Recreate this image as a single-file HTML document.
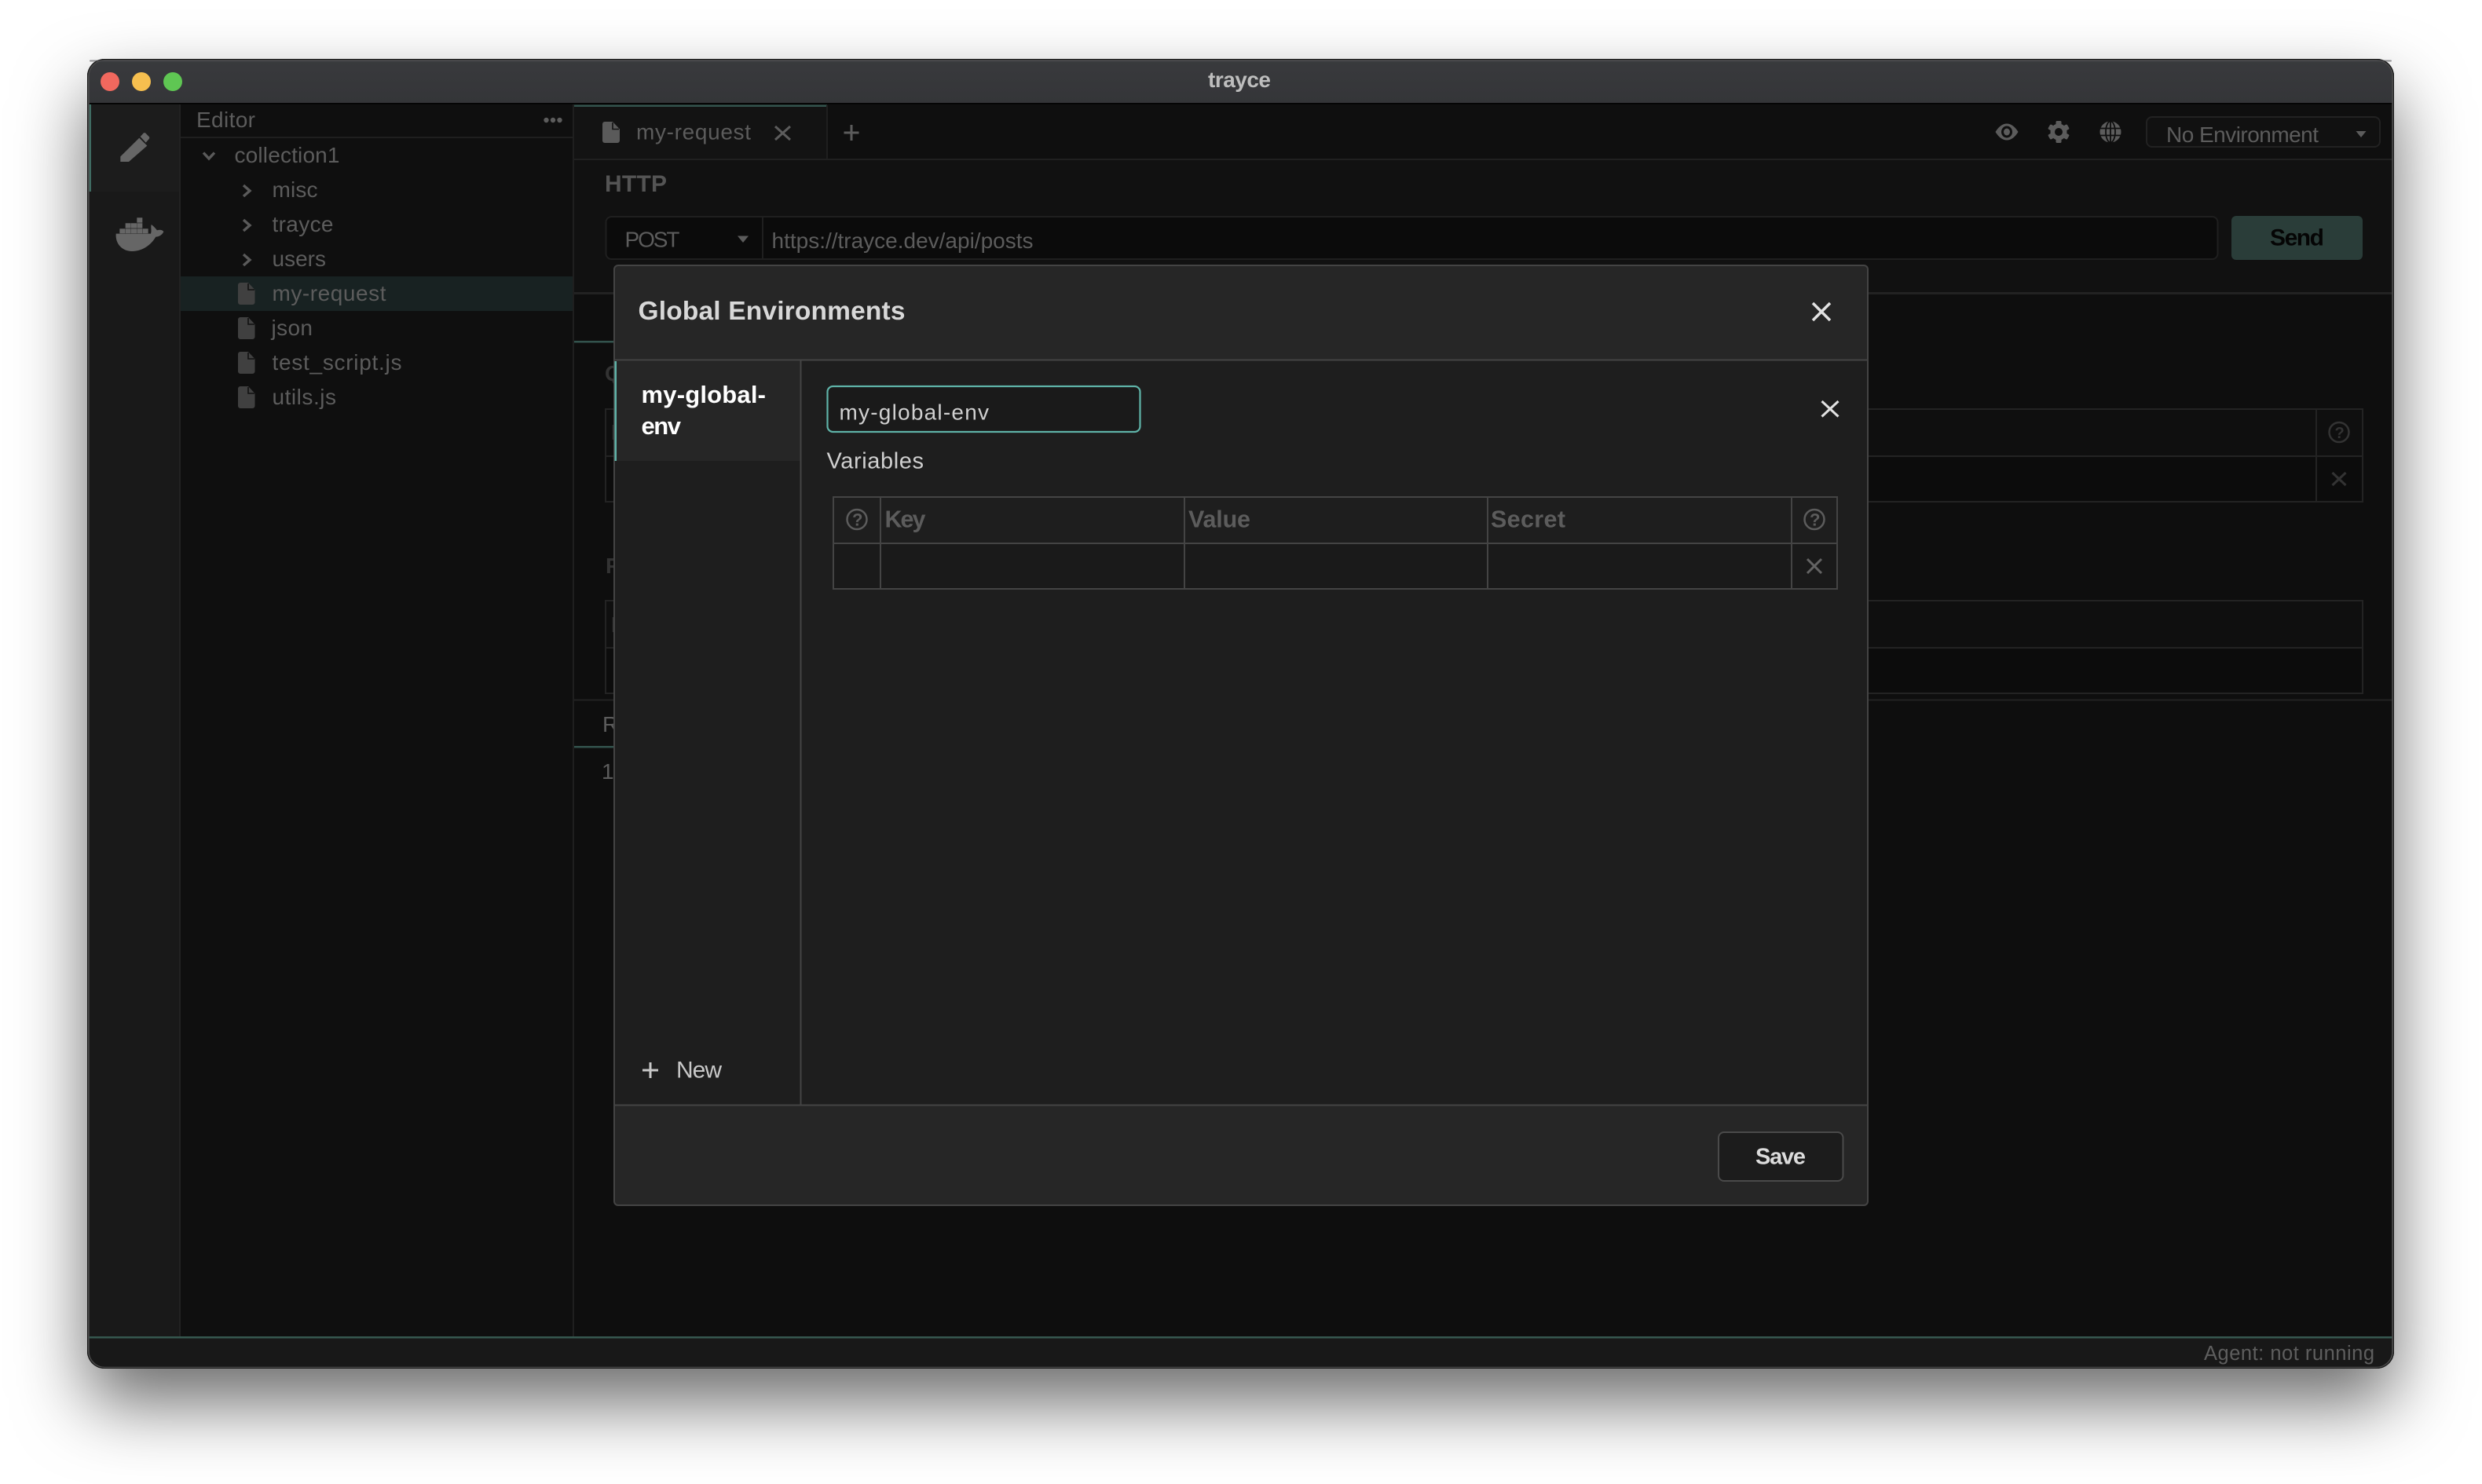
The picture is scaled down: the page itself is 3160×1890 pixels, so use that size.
<!DOCTYPE html>
<html><head><meta charset="utf-8"><title>trayce</title>
<style>
html,body{margin:0;padding:0;width:3160px;height:1890px;background:#fff;overflow:hidden}
#win{position:absolute;left:111px;top:75px;width:2937px;height:1668px;border-radius:22px;box-shadow:0 44px 90px 0 rgba(0,0,0,.58);background:#111}
svg{position:absolute;left:0;top:0}
text{font-family:"Liberation Sans",sans-serif;font-size:28px;fill:#5c5c5c}
.b{font-weight:700}
</style></head><body>
<div id="win"></div>
<svg width="3160" height="1890" viewBox="0 0 3160 1890" xmlns="http://www.w3.org/2000/svg">
<defs>
<clipPath id="w"><rect x="111" y="75" width="2937" height="1668" rx="22"/></clipPath>
<linearGradient id="tb" x1="0" y1="0" x2="0" y2="1"><stop offset="0" stop-color="#393a3d"/><stop offset="1" stop-color="#343538"/></linearGradient>
<g id="file"><path d="M0 3a3 3 0 0 1 3-3H13L21.5 9V25a3 3 0 0 1-3 3H3a3 3 0 0 1-3-3Z" fill="#404040"/><path d="M13 1V9H21" fill="none" stroke="#111" stroke-width="1.6"/></g>
<path id="cr" d="M-4-7 L4 0 L-4 7" fill="none" stroke="#5a5a5a" stroke-width="3.4"/>
</defs>
<g clip-path="url(#w)">
<rect x="111" y="75" width="2937" height="1668" fill="#0e0e0e"/>
<!-- title bar -->
<rect x="111" y="75" width="2937" height="57" fill="url(#tb)"/>
<rect x="111" y="131" width="2937" height="2.5" fill="#050505"/>
<circle cx="140" cy="104" r="12" fill="#f1685e"/><circle cx="180" cy="104" r="12" fill="#f6bf4f"/><circle cx="220" cy="104" r="12" fill="#5fc653"/>
<text class="b" x="1538" y="111" textLength="80" style="fill:#bdbdbd">trayce</text>
<!-- activity bar -->
<rect x="111" y="133" width="119" height="1570" fill="#191919"/>
<rect x="116" y="133" width="113" height="111" fill="#1c1c1c"/>
<rect x="112" y="133" width="4" height="111" fill="#3f6b62"/>
<g transform="translate(90 60) scale(.3333)" fill="#666">
<path d="M190 418L262 347L292 377L222 438H190Z"/>
<path d="M266 342L278 329Q282 326 286 329L299 342Q303 346 299 351L287 365Z"/>
</g>
<g transform="translate(90 60) scale(.3333)" fill="#666">
<path d="M173 713H306C310 700 305 690 308 678C318 685 326 695 330 700C340 697 350 698 355 705C350 718 335 725 325 725C305 760 270 780 235 780C195 780 170 750 173 713Z"/>
<path d="M187 694h21v18h-21zM209 694h21v18h-21zM231 694h21v18h-21zM253 694h21v18h-21zM275 694h21v18h-21zM209 673h21v19h-21zM231 673h21v19h-21zM253 673h21v19h-21zM253 652h21v19h-21z"/>
</g>
<rect x="228" y="133" width="2" height="1570" fill="#222"/>
<!-- explorer -->
<rect x="230" y="133" width="500" height="1570" fill="#0f0f0f"/>
<rect x="230" y="174" width="500" height="2" fill="#1f1f1f"/>
<rect x="729" y="133" width="2" height="1570" fill="#1f1f1f"/>
<text x="250" y="162" textLength="75">Editor</text>
<circle cx="695.5" cy="153" r="3.2" fill="#5c5c5c"/><circle cx="704" cy="153" r="3.2" fill="#5c5c5c"/><circle cx="712.5" cy="153" r="3.2" fill="#5c5c5c"/>
<path d="M259 194.500L266 202L273 194.500" fill="none" stroke="#5a5a5a" stroke-width="3.4"/>
<text x="298.500" y="207" textLength="134">collection1</text>
<use href="#cr" x="314" y="243"/><text x="346.500" y="251" textLength="58">misc</text>
<use href="#cr" x="314" y="287"/><text x="346.500" y="295" textLength="78">trayce</text>
<use href="#cr" x="314" y="331"/><text x="346.500" y="339" textLength="68.500">users</text>
<rect x="230" y="352" width="499" height="44" fill="#182222"/>
<use href="#file" x="303" y="360"/><text x="346.500" y="383" textLength="145">my-request</text>
<use href="#file" x="303" y="404"/><text x="345.500" y="427" textLength="52.500">json</text>
<use href="#file" x="303" y="448"/><text x="346.500" y="471" textLength="165">test_script.js</text>
<use href="#file" x="303" y="492"/><text x="346.500" y="515" textLength="81.500">utils.js</text>
<!-- tab bar -->
<rect x="731" y="133" width="2317" height="70" fill="#0f0f0f"/>
<rect x="731" y="134" width="322" height="69" fill="#131313"/>
<rect x="731" y="133.500" width="322" height="2.500" fill="#33534d"/>
<rect x="1052" y="134" width="2" height="69" fill="#1f1f1f"/>
<rect x="731" y="202" width="2317" height="2" fill="#202020"/>
<g transform="translate(767 155)"><path d="M0 3a3 3 0 0 1 3-3H13L22 9.500V24a3 3 0 0 1-3 3H3a3 3 0 0 1-3-3Z" fill="#5a5a5a"/><path d="M13 1V9.500H21" fill="none" stroke="#131313" stroke-width="1.6"/></g>
<text x="810" y="177.500" textLength="146">my-request</text>
<path d="M987 161L1006 178M1006 161L987 178" stroke="#5c5c5c" stroke-width="3" fill="none"/>
<path d="M1084 159V179M1074.500 169H1093.500" stroke="#5c5c5c" stroke-width="3" fill="none"/>
<!-- eye -->
<path d="M2540.500 168Q2547 157.500 2555 157.500Q2563 157.500 2569.500 168Q2563 178.500 2555 178.500Q2547 178.500 2540.500 168Z" fill="#5c5c5c"/>
<ellipse cx="2555" cy="168" rx="7" ry="7.500" fill="#0f0f0f"/><ellipse cx="2555" cy="168" rx="4" ry="4.500" fill="#5c5c5c"/>
<!-- gear -->
<g transform="translate(2621 168)" fill="#5c5c5c">
<circle r="10.500"/>
<rect x="-3.500" y="-14" width="7" height="28" rx="1.500"/>
<rect x="-3.500" y="-14" width="7" height="28" rx="1.500" transform="rotate(60)"/>
<rect x="-3.500" y="-14" width="7" height="28" rx="1.500" transform="rotate(120)"/>
<circle r="5" fill="#0f0f0f"/>
</g>
<!-- globe -->
<g transform="translate(2687 168)">
<circle r="13.500" fill="#5c5c5c"/>
<g fill="none" stroke="#0f0f0f" stroke-width="1.800">
<ellipse rx="6" ry="13.500"/><path d="M0-13.500V13.500M-13-4.500H13M-13 4.500H13"/>
</g></g>
<rect x="2733" y="149" width="297" height="38" rx="7" fill="#111" stroke="#222" stroke-width="2"/>
<text x="2758" y="181" textLength="194">No Environment</text>
<path d="M2999.500 167H3012.500L3006 175Z" fill="#5c5c5c"/>
<!-- request panel -->
<rect x="731" y="204" width="2317" height="169" fill="#111"/>
<text class="b" x="770" y="244" textLength="79" style="fill:#545454;font-size:30px">HTTP</text>
<rect x="771.500" y="276" width="2052" height="54" rx="7" fill="#0b0b0b" stroke="#1f1f1f" stroke-width="2"/>
<rect x="970" y="276" width="2" height="54" fill="#1f1f1f"/>
<text x="795.500" y="314.500" textLength="70">POST</text>
<path d="M939 300.500H953L946 309Z" fill="#5c5c5c"/>
<text x="982.500" y="316" textLength="333">https://trayce.dev/api/posts</text>
<rect x="2841" y="275" width="167" height="56" rx="6" fill="#2a3d39"/>
<text class="b" x="2890" y="312.500" textLength="69" style="fill:#050505;font-size:30px">Send</text>
<rect x="731" y="372" width="2317" height="3" fill="#222"/>
<!-- lower panel -->
<rect x="731" y="375" width="2317" height="517" fill="#0e0e0e"/>
<rect x="731" y="434" width="60" height="2.500" fill="#33534d"/>
<text class="b" x="770" y="485" style="fill:#333">Query</text>
<text class="b" x="771" y="730" style="fill:#333">Path</text>
<g fill="none" stroke="#232323" stroke-width="2">
<rect x="771" y="521" width="2237" height="118" fill="#0f0f0f"/>
<rect x="771" y="581" width="2237" height="58" fill="#0c0c0c"/>
<path d="M2949 521V639"/>
<rect x="771" y="765" width="2237" height="118" fill="#0f0f0f"/>
<rect x="771" y="825" width="2237" height="58" fill="#0c0c0c"/>
</g>
<text class="b" x="778" y="560" style="fill:#333">Key</text>
<text class="b" x="778" y="805" style="fill:#333">Key</text>
<g transform="translate(2978 550.500)"><circle r="12.500" fill="none" stroke="#333" stroke-width="2.500"/><text x="-5.500" y="7.500" style="font-size:20px;fill:#333;font-weight:700">?</text></g>
<path d="M2969.500 602L2986.500 618M2986.500 602L2969.500 618" stroke="#333" stroke-width="3" fill="none"/>
<rect x="731" y="890.500" width="2317" height="2" fill="#222"/>
<text x="767" y="932">Response</text>
<rect x="731" y="950" width="300" height="2.500" fill="#33534d"/>
<text x="766" y="992">1</text>
<!-- status bar -->
<rect x="111" y="1704" width="2937" height="39" fill="#181818"/>
<rect x="111" y="1702" width="2937" height="2.500" fill="#36574f"/>
<text x="2806" y="1732" textLength="217" style="font-size:25.500px;fill:#5e5e5e">Agent: not running</text>
</g>
<rect x="112.500" y="76" width="2934" height="1666" rx="21" fill="none" stroke="#4a4a4a" stroke-width="2.500" clip-path="url(#w)"/>
<rect x="111.500" y="75.500" width="2936" height="1667" rx="22" fill="none" stroke="#161616" stroke-width="1"/>
<rect x="114" y="76.500" width="2931" height="2" fill="#4c4d50" rx="1" opacity=".6"/>
<!-- modal -->
<rect x="782" y="338" width="1596" height="1197" rx="5" fill="#262626" stroke="#444" stroke-width="2"/>
<rect x="783" y="459" width="1594" height="948" fill="#1e1e1e"/>
<rect x="783" y="457.500" width="1594" height="2" fill="#444"/>
<rect x="783" y="1406.500" width="1594" height="2" fill="#444"/>
<rect x="1018.500" y="459" width="2" height="948" fill="#444"/>
<rect x="783" y="460" width="235.500" height="127" fill="#262626"/>
<rect x="782.500" y="460" width="2.500" height="127" fill="#5fb3a8"/>
<text class="b" x="812.500" y="407" textLength="340" style="font-size:33.500px;fill:#d8d8d8">Global Environments</text>
<path d="M2308 386L2330 408M2330 386L2308 408" stroke="#e2e2e2" stroke-width="3.500" fill="none"/>
<text class="b" x="816.500" y="513" textLength="158.500" style="font-size:31px;fill:#fff">my-global-</text>
<text class="b" x="816.500" y="553" textLength="50.500" style="font-size:31px;fill:#fff">env</text>
<rect x="1053.500" y="492" width="398" height="58" rx="7" fill="#1a1a1a" stroke="#5fb3a8" stroke-width="2.200"/>
<text x="1068.500" y="534.500" textLength="190.500" style="fill:#d0d0d0">my-global-env</text>
<path d="M2319.500 511L2340.500 530.500M2340.500 511L2319.500 530.500" stroke="#e2e2e2" stroke-width="3" fill="none"/>
<text x="1052.500" y="596.500" textLength="123.500" style="font-size:29px;fill:#d0d0d0">Variables</text>
<!-- variables table -->
<rect x="1061" y="692" width="1278" height="58" fill="#1a1a1a"/>
<g fill="none" stroke="#444" stroke-width="2">
<rect x="1061" y="633" width="1278" height="117"/>
<path d="M1061 692H2339M1121 633V750M1508 633V750M1894 633V750M2281 633V750"/>
</g>
<text class="b" x="1126.500" y="671.500" textLength="52" style="font-size:30.500px">Key</text>
<text class="b" x="1513" y="671.500" textLength="79" style="font-size:30.500px">Value</text>
<text class="b" x="1898" y="671.500" textLength="95" style="font-size:30.500px">Secret</text>
<g transform="translate(1091 661.500)"><circle r="12.500" fill="none" stroke="#5c5c5c" stroke-width="2.500"/><text x="-6" y="8" style="font-size:22px;font-weight:700">?</text></g>
<g transform="translate(2310 661.500)"><circle r="12.500" fill="none" stroke="#5c5c5c" stroke-width="2.500"/><text x="-6" y="8" style="font-size:22px;font-weight:700">?</text></g>
<path d="M2301 712L2319 730M2319 712L2301 730" stroke="#636363" stroke-width="3" fill="none"/>
<path d="M828 1353V1373M818 1363H838" stroke="#c8c8c8" stroke-width="3" fill="none"/>
<text x="861" y="1372.500" textLength="58" style="font-size:30px;fill:#c8c8c8">New</text>
<rect x="2188" y="1442" width="158.500" height="62" rx="7" fill="#1c1c1c" stroke="#4a4a4a" stroke-width="2"/>
<text class="b" x="2235" y="1482.500" textLength="64" style="font-size:29px;fill:#dcdcdc">Save</text>
</svg>
</body></html>
